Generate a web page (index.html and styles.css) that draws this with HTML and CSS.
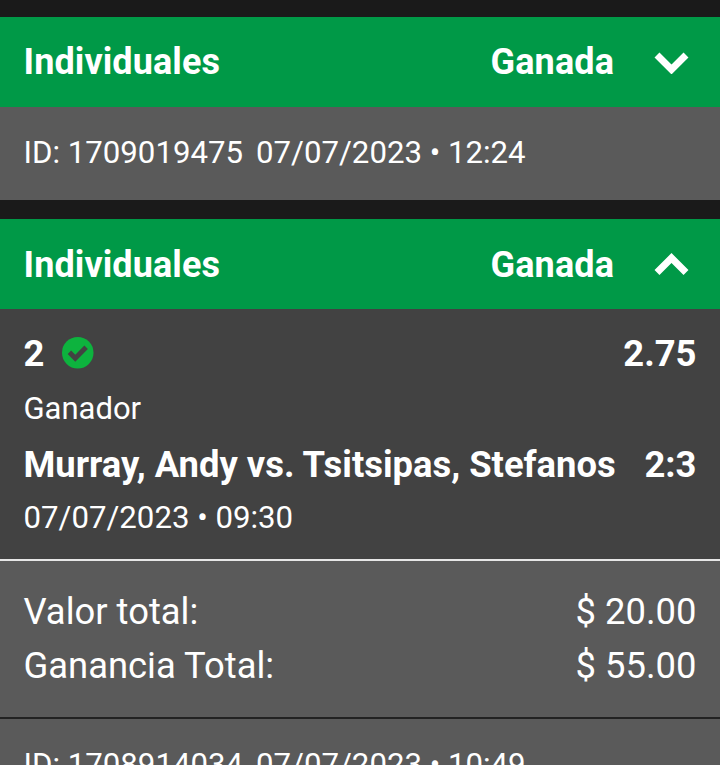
FILE: index.html
```html
<!DOCTYPE html>
<html lang="es">
<head>
  <meta charset="UTF-8" />
  <title>Apuestas</title>
  <link rel="stylesheet" href="styles.css">
</head>
<body>

  <!-- Bet collapsed -->
  <section class="bet">
    <header class="bet-head">
      <span class="bet-type">Individuales</span>
      <span class="bet-status">Ganada</span>
      <svg class="chevron" viewBox="0 0 35 24" aria-hidden="true"><path d="M3 5 L17.5 19.5 L32 5"/></svg>
    </header>
    <div class="bet-id"><span>ID: 1709019475</span><span>07/07/2023 • 12:24</span></div>
  </section>

  <!-- Bet open -->
  <section class="bet">
    <header class="bet-head bet-head-open">
      <span class="bet-type">Individuales</span>
      <span class="bet-status">Ganada</span>
      <svg class="chevron" viewBox="0 0 35 24" aria-hidden="true"><path d="M3 19.5 L17.5 5 L32 19.5"/></svg>
    </header>

    <div class="pick">
      <div class="pick-row pick-top">
        <div class="pick-result">
          <span>2</span>
          <svg class="check" viewBox="0 0 32 32" aria-hidden="true">
            <circle cx="16" cy="16" r="16"/>
            <path d="M7.5 15.5 L13.5 21.5 L24.5 10.5"/>
          </svg>
        </div>
        <span>2.75</span>
      </div>
      <div class="pick-market">Ganador</div>
      <div class="pick-row pick-match">
        <span>Murray, Andy vs. Tsitsipas, Stefanos</span>
        <span>2:3</span>
      </div>
      <div class="pick-date">07/07/2023 • 09:30</div>
    </div>

    <div class="totals">
      <div class="pick-row"><span>Valor total:</span><span>$ 20.00</span></div>
      <div class="pick-row"><span>Ganancia Total:</span><span>$ 55.00</span></div>
    </div>

    <div class="bet-id bet-id-last"><span>ID: 1708914034</span><span>07/07/2023 • 10:49</span></div>
  </section>

</body>
</html>
```

FILE: styles.css
```css
/* Reset & Base */
* { margin: 0; padding: 0; box-sizing: border-box; }
html, body { height: 765px; overflow: hidden; }
body {
  font-family: 'Roboto', sans-serif;
  color: #fff;
  background-color: #1a1a1a;
  padding-top: 17px;
}

/* Bet card */
.bet { margin-bottom: 19px; }
.bet-head {
  height: 90px;
  padding: 0 31px 0 23.5px;
  display: flex;
  align-items: center;
  background: #009947;
  font-size: 36px;
  font-weight: 700;
  letter-spacing: 0.1px;
}
.bet-head-open { padding-top: 2px; }
.bet-type { flex: 1; }
.chevron { width: 35px; height: 24px; margin-left: 40px; }
.chevron path { fill: none; stroke: #fff; stroke-width: 7; }

.bet-id {
  height: 93px;
  padding: 0 23.5px 2px;
  display: flex;
  align-items: center;
  gap: 13px;
  background: #5a5a5a;
  font-size: 31.2px;
}
.bet-id-last { height: 95px; border-top: 2px solid #222; }

/* Pick */
.pick {
  height: 250px;
  padding: 21px 23.5px 0;
  background: #424242;
}
.pick-row { display: flex; justify-content: space-between; align-items: center; }
.pick-top, .pick-match { font-size: 36.4px; font-weight: 700; }
.pick-top { height: 46px; }
.pick-result { display: flex; align-items: center; gap: 18px; }
.check { width: 31.5px; height: 31.5px; }
.check circle { fill: #0db33e; }
.check path { fill: none; stroke: #424242; stroke-width: 5; }
.pick-market { font-size: 31px; margin-top: 11px; height: 44px; line-height: 44px; }
.pick-match { margin-top: 10px; height: 46px; }
.pick-date { font-size: 31.2px; margin-top: 12px; }

/* Totals */
.totals {
  height: 158px;
  padding: 24px 23.5px 0;
  background: #5a5a5a;
  border-top: 2px solid #e6e6e6;
  font-size: 36.4px;
  line-height: 54px;
}
```
